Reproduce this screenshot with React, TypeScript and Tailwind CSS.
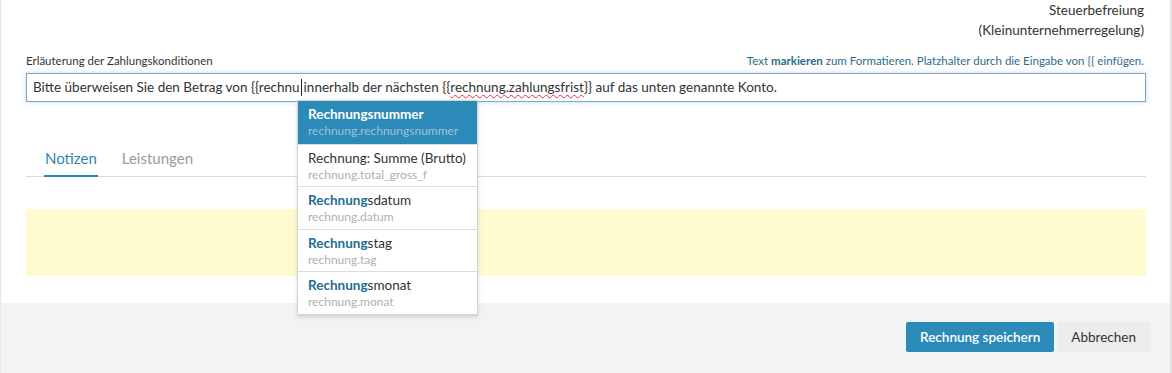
import React from "react";

const items = [
  { rest: "snummer", sub: "rechnung.rechnungsnummer", active: true },
  { plain: "Rechnung: Summe (Brutto)", sub: "rechnung.total_gross_f" },
  { rest: "sdatum", sub: "rechnung.datum" },
  { rest: "stag", sub: "rechnung.tag" },
  { rest: "smonat", sub: "rechnung.monat" },
];

export default function App() {
  return (
    <div
      className="w-[1172px] h-[373px] bg-[#f3f3f3] flex overflow-hidden"
      style={{ fontFamily: "Lato, 'Noto Sans', sans-serif" }}
    >
      <div className="w-[1px] bg-[#e6e6e6]" />
      <div className="w-[1169px] flex flex-col">
        <div className="bg-white h-[303px] relative px-[25px]">
          <div className="flex flex-col items-end pr-[1px] text-[13.5px] leading-[20px] text-[#333]">
            <div>Steuerbefreiung</div>
            <div>(Kleinunternehmerregelung)</div>
          </div>
          <div className="flex justify-between items-end mt-[13px] text-[11.5px] leading-[16px]">
            <span className="text-[#333]">Erläuterung der Zahlungskonditionen</span>
            <span className="text-[#2d6b8e] pr-[1px]">
              Text <b className="font-bold">markieren</b> zum Formatieren. Platzhalter durch die Eingabe von {"{{"} einfügen.
            </span>
          </div>
          <div className="mt-[4px] w-[1120px] h-[29px] border border-[#7ea7c6] shadow-[0_0_5px_rgba(90,150,200,0.35)] flex items-center px-[6px] text-[13.5px] text-[#333] whitespace-nowrap">
            <span>Bitte überweisen Sie den Betrag von {"{{"}rechnu</span>
            <span className="inline-block w-[1px] h-[17px] bg-[#222] ml-[1px] mr-[2px]" />
            <span>innerhalb der nächsten {"{{"}</span>
            <span className="underline decoration-wavy decoration-[#d33] decoration-[1px] underline-offset-[2px]">rechnung.zahlungsfrist</span>
            <span>{"}}"} auf das unten genannte Konto.</span>
          </div>
          <div className="mt-[45px] w-[1120px] border-b border-[#dcdcdc] flex gap-[24px] pl-[18px] text-[15px] leading-[22px]">
            <div className="text-[#2f86b7] pb-[6px] border-b-2 border-[#2a86b6] -mb-[1px] px-[1px]">Notizen</div>
            <div className="text-[#9b9b9b] pb-[6px]">Leistungen</div>
          </div>
          <div className="mt-[32px] w-[1120px] h-[67px] bg-[#fffbd0]" />

          <div className="absolute left-[296px] top-[100px] w-[181px] bg-white border border-[#d5d5d5] shadow-[0_2px_4px_rgba(0,0,0,0.15)]">
            {items.map((it, i) => (
              <div
                key={i}
                className={
                  "h-[42.6px] px-[10px] pt-[4px] flex flex-col whitespace-nowrap " +
                  (it.active ? "bg-[#2b8ab7]" : "bg-white") +
                  (i > 0 ? " border-t border-[#dcdcdc]" : "")
                }
              >
                <div className={"text-[13.5px] leading-[18px] " + (it.active ? "text-white" : "text-[#333]")}>
                  {it.plain ? (
                    it.plain
                  ) : (
                    <>
                      <b className={"font-bold " + (it.active ? "text-white" : "text-[#1f6d94]")}>Rechnung</b>
                      <span className={it.active ? "font-bold" : ""}>{it.rest}</span>
                    </>
                  )}
                </div>
                <div className={"text-[12px] leading-[16px] " + (it.active ? "text-[#9ec3d7]" : "text-[#b0b0b0]")}>
                  {it.sub}
                </div>
              </div>
            ))}
          </div>
        </div>
        <div className="flex-1 bg-[#f3f3f3] flex justify-end items-start pt-[19px] pr-[20px] gap-[3px]">
          <button className="h-[30px] px-[14px] bg-[#2b8ab7] rounded-[2px] text-white text-[13.5px] font-semibold">
            Rechnung speichern
          </button>
          <button className="h-[30px] px-[14px] bg-[#ececec] rounded-[2px] text-[#333] text-[13.5px]">
            Abbrechen
          </button>
        </div>
      </div>
      <div className="w-[2px] bg-[#e2e2e2]" />
    </div>
  );
}
